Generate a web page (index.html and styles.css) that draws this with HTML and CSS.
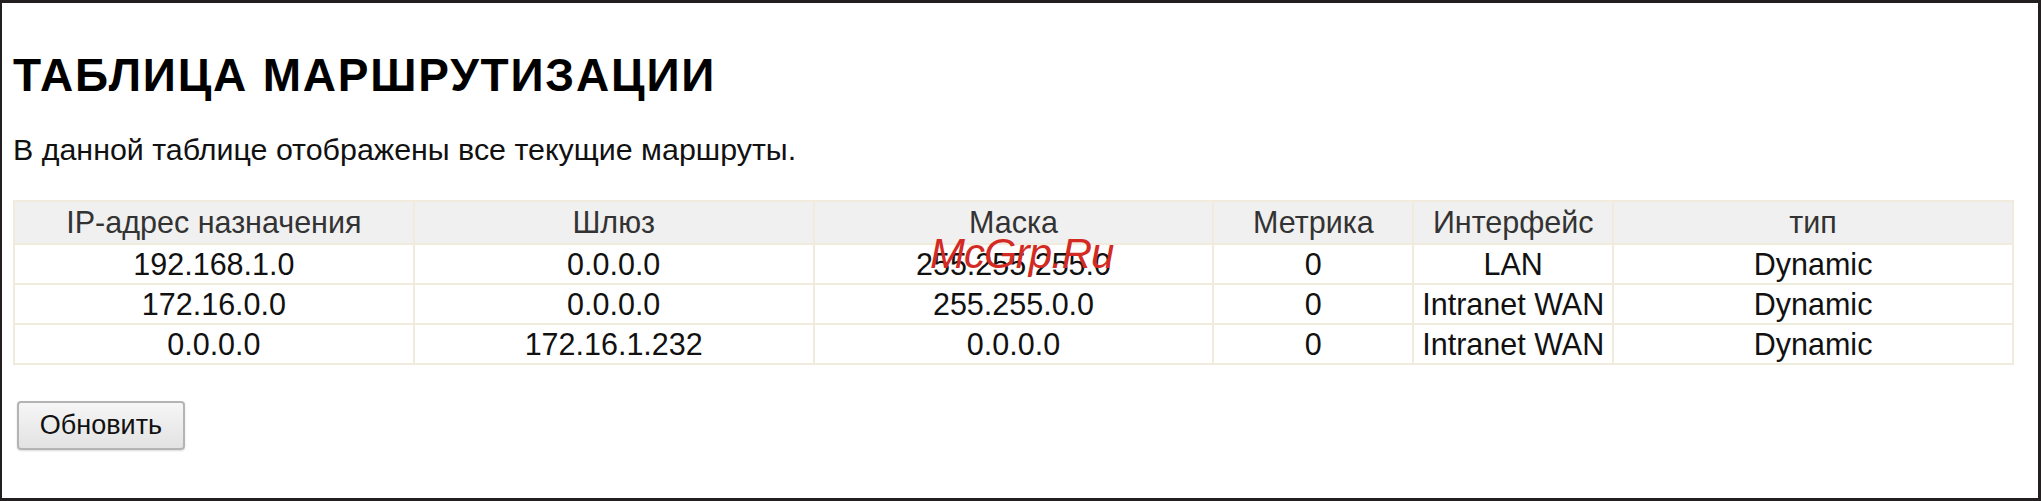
FILE: index.html
```html
<!DOCTYPE html>
<html lang="ru">
<head>
<meta charset="utf-8">
<title>Таблица маршрутизации</title>
<link rel="stylesheet" href="styles.css">
</head>
<body>
<div class="frame">
  <h1 class="title">ТАБЛИЦА МАРШРУТИЗАЦИИ</h1>
  <p class="desc">В данной таблице отображены все текущие маршруты.</p>
  <table class="routes">
    <colgroup>
      <col class="c-wide"><col class="c-wide"><col class="c-wide"><col class="c-narrow"><col class="c-narrow"><col class="c-wide">
    </colgroup>
    <thead>
      <tr><th>IP-адрес назначения</th><th>Шлюз</th><th>Маска</th><th>Метрика</th><th>Интерфейс</th><th>тип</th></tr>
    </thead>
    <tbody>
      <tr><td>192.168.1.0</td><td>0.0.0.0</td><td>255.255.255.0</td><td>0</td><td>LAN</td><td>Dynamic</td></tr>
      <tr><td>172.16.0.0</td><td>0.0.0.0</td><td>255.255.0.0</td><td>0</td><td>Intranet WAN</td><td>Dynamic</td></tr>
      <tr><td>0.0.0.0</td><td>172.16.1.232</td><td>0.0.0.0</td><td>0</td><td>Intranet WAN</td><td>Dynamic</td></tr>
    </tbody>
  </table>
  <button class="btn" type="button">Обновить</button>
  <div class="watermark">McGrp.Ru</div>
</div>
</body>
</html>
```
FILE: styles.css
```css
html, body {
  margin: 0;
  padding: 0;
  background: #ffffff;
}
.frame {
  position: relative;
  width: 2041px;
  height: 501px;
  box-sizing: border-box;
  border: 3px solid #231f20;
  border-left-width: 2px;
  padding: 0 24px 0 11px;
  font-family: "Liberation Sans", Arial, sans-serif;
  color: #111;
  overflow: hidden;
}
.title {
  margin: 46px 0 0 0;
  font-size: 46px;
  line-height: 53px;
  font-weight: bold;
  color: #000;
  letter-spacing: 1.8px;
}
.desc {
  margin: 30px 0 0 0;
  font-size: 30.4px;
  line-height: 34px;
  color: #111;
}
.routes {
  margin-top: 34px;
  width: 2001px;
  border-collapse: collapse;
  table-layout: fixed;
  font-size: 30.5px;
}
.c-wide { width: 20%; }
.c-narrow { width: 10%; }
.routes th,
.routes td {
  border: 2px solid #f0ebdc;
  padding: 0;
  text-align: center;
  white-space: nowrap;
}
.routes th {
  background: #f0f0f0;
  font-weight: normal;
  color: #333;
  line-height: 41px;
}
.routes td {
  line-height: 38px;
  color: #111;
}
.btn {
  display: block;
  margin-top: 36px;
  margin-left: 4px;
  height: 49px;
  width: 168px;
  padding: 0;
  font-family: "Liberation Sans", Arial, sans-serif;
  font-size: 27px;
  color: #111;
  background: linear-gradient(#f6f6f6, #e2e2e2);
  border: 2px solid #b4b4b4;
  border-radius: 4px;
  box-shadow: 0 1px 2px rgba(0,0,0,0.15);
}
.watermark {
  position: absolute;
  left: 928px;
  top: 228px;
  font-family: "Liberation Sans", Arial, sans-serif;
  font-style: italic;
  font-size: 42px;
  line-height: 46px;
  color: #d42a24;
  letter-spacing: -1px;
}
```
